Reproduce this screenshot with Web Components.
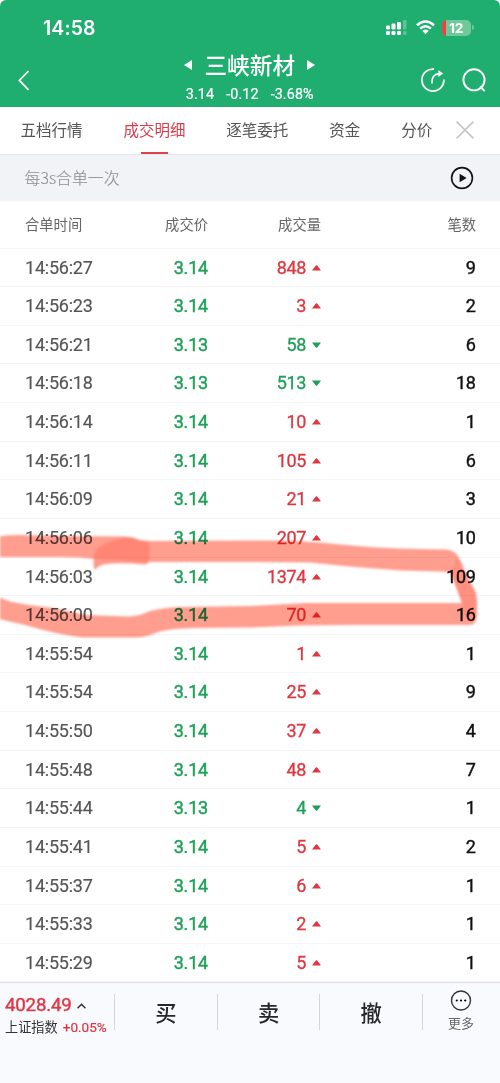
<!DOCTYPE html>
<html lang="zh-CN">
<head>
<meta charset="utf-8">
<title>三峡新材 成交明细</title>
<style>
html,body{margin:0;padding:0}
body{width:500px;height:1083px;overflow:hidden;background:#fff;font-family:Roboto,"Noto Sans CJK SC",sans-serif}
</style>
</head>
<body>
<trade-app></trade-app>
<script>
const define = (name, html, render) => customElements.define(name, class extends HTMLElement {
  connectedCallback() {
    if (this.shadowRoot) return;
    const root = this.attachShadow({mode: 'open'});
    const t = document.createElement('template');
    t.innerHTML = '<style>*{box-sizing:border-box}svg{display:block;flex:none}</style>' + (render ? render(this) : html);
    root.appendChild(t.content.cloneNode(true));
  }
});

define('status-bar', `
<style>
:host{display:flex;height:54px;padding:0 26px 0 43px;justify-content:space-between;align-items:center;color:#fff}
.time{font:600 19.4px/22px Inter,sans-serif;letter-spacing:.15px;padding-top:1px}
.icons{display:flex;align-items:center;gap:9px;padding-top:1px}
.bat{display:flex;align-items:center;gap:1px;margin-left:-2px}
.cell{width:29.500px;height:16px;border-radius:5px;background:linear-gradient(90deg,#f0433f 4px,#70c998 4px);font:700 13.800px/16px Inter,sans-serif;text-align:center;letter-spacing:0}
.nub{width:2px;height:5px;border-radius:0 2px 2px 0;background:#70c998}
</style>
<div class="time">14:58</div>
<div class="icons">
<svg width="21" height="16" viewBox="0 0 21 16" fill="#fff"><rect x="0" y="5.4" width="4" height="4" rx="1.2"/><rect x="5.5" y="3.5" width="4" height="5.9" rx="1.2"/><rect x="11" y="2" width="4" height="7.4" rx="1.2"/><rect x="17" y="0" width="3.5" height="9.4" rx="1.2" opacity=".28"/><rect x="0" y="11" width="4" height="4" rx="1.2"/><rect x="5.5" y="11" width="4" height="4" rx="1.2"/><rect x="11" y="11" width="4" height="4" rx="1.2"/><rect x="17" y="11" width="3.5" height="4" rx="1.2" opacity=".28"/></svg>
<svg width="19" height="15" viewBox="0 0 19 15" fill="none" stroke="#fff" stroke-width="2.5"><path d="M1 5.2Q9.5-2.2 18 5.2M4.1 8.6Q9.5 3.8 14.9 8.6"/><path d="M6.3 10.8Q9.5 8 12.7 10.8L9.5 14.3Z" fill="#fff" stroke="none"/></svg>
<div class="bat"><div class="cell">12</div><div class="nub"></div></div>
</div>`);

define('stock-header', `
<style>
:host{display:flex;height:52px;padding:0 14.500px 0 18px;color:#fff;align-items:stretch;justify-content:space-between}
.side{display:flex;width:64px;align-items:center}
.r{justify-content:flex-end;gap:17px}
.mid{display:flex;flex-direction:column;align-items:center;margin-left:-4px}
.name{display:flex;align-items:center;height:26px;gap:12px;font:500 22.7px/26px "Noto Sans CJK SC",sans-serif;margin-top:-2px}
.q{display:flex;gap:12px;font-size:14.3px;line-height:17px;margin-top:8px;letter-spacing:.12px;-webkit-text-stroke:.2px #fff}
</style>
<div class="side"><svg width="12" height="21" viewBox="0 0 12 21" fill="none" stroke="#fff" stroke-width="1.7"><path d="M10.5 1L1.4 10.4l9.1 9.4"/></svg></div>
<div class="mid"><div class="name"><svg width="8" height="10"><path d="M8 0v10L0 5z" fill="#fff"/></svg><span>三峡新材</span><svg width="8" height="10"><path d="M0 0v10l8-5z" fill="#fff"/></svg></div>
<div class="q"><span>3.14</span><span>-0.12</span><span>-3.68%</span></div></div>
<div class="side r"><svg width="24" height="24" viewBox="0 0 24 24" fill="none" stroke="#fff" stroke-width="1.7"><path d="M13 1.1A11 11 0 1 0 22.900 11.500"/><path d="M11 15.500Q10.400 6 18.5 5.6"/><path d="M17.300 2.300l4.900 3.300-4.900 3.300z" fill="#fff" stroke="none"/></svg>
<svg width="24" height="24" viewBox="0 0 24 24" fill="none" stroke="#fff" stroke-width="1.9"><circle cx="12" cy="11.8" r="10.6"/><path d="M18.2 18.4l4.4 4.8"/></svg></div>`);

define('tab-item', '', el => `
<style>
:host{display:flex;position:relative;height:48px;padding-bottom:2px;align-items:center;color:${el.hasAttribute('active') ? '#dc3c49' : '#555'};font:400 15.5px/20px "Noto Sans CJK SC",sans-serif;white-space:nowrap}
i{position:absolute;left:50%;bottom:0;width:27px;height:2px;margin-left:-13.5px;background:#e0414c}
</style><slot></slot>${el.hasAttribute('active') ? '<i></i>' : ''}`);

define('tab-bar', `
<style>
:host{display:flex;height:48px;padding-left:20.500px;gap:40.900px;align-items:center;background:#fff;border-bottom:1px solid #e6e7ea}
svg{margin-left:-17.300px}
</style><slot></slot><svg width="18" height="18" viewBox="0 0 18 18" stroke="#c4c4c4" stroke-width="1.5"><path d="M.6.6l16.8 16.8M17.4.6L.6 17.4"/></svg>`);

define('merge-bar', `
<style>
:host{display:flex;height:46px;padding:0 26px 0 24.500px;align-items:center;justify-content:space-between;background:#f2f3f7;color:#8f9095;font:300 15.9px/20px "Noto Sans CJK SC",sans-serif;-webkit-text-stroke:.15px #8f9095}
</style><slot></slot><svg width="24" height="24" viewBox="0 0 24 24"><circle cx="12" cy="12" r="10.4" fill="none" stroke="#101216" stroke-width="1.6"/><path d="M9.6 7.8v8.4l7-4.2z" fill="#101216"/></svg>`);

define('list-head', `
<style>
:host{display:grid;grid-template-columns:108px 75px 113px 1fr;height:48px;padding:0 24px 0 25px;align-items:center;border-bottom:1px solid #f5f5f6;color:#666;font:400 14.3px/18px "Noto Sans CJK SC",sans-serif;text-align:right}
.t{text-align:left}
</style><span class="t">合单时间</span><span>成交价</span><span>成交量</span><span>笔数</span>`);

define('trade-row', '', el => {
  const [time, price, vol, dir, count] = el.getAttribute('data').split(',');
  const c = dir === 'u' ? '#df3640' : '#1ea057';
  return `
<style>
:host{display:grid;grid-template-columns:108px 75px 113px 1fr;height:38.63px;padding:.5px 24.5px 0 25px;align-items:center;border-bottom:1px solid #f5f5f6;font-size:18px;line-height:22px;text-align:right;letter-spacing:-.13px}
.t{text-align:left;color:#555;letter-spacing:-.22px;-webkit-text-stroke:.15px #555}
.p{color:#1ea057;letter-spacing:-.2px;-webkit-text-stroke:.4px #1ea057}
.v{display:flex;justify-content:flex-end;align-items:center;gap:6px;color:${c};letter-spacing:-.35px;-webkit-text-stroke:.3px ${c}}
.n{color:#111;letter-spacing:-.35px;-webkit-text-stroke:.4px #111}
</style>
<span class="t">${time}</span><span class="p">${price}</span><span class="v">${vol}<svg width="9" height="6"><path d="${dir === 'u' ? 'M0 5.5h9L5.2.5Q4.5 0 3.8.5z' : 'M0 .5h9L5.2 5.5Q4.5 6 3.8 5.5z'}" fill="${c}"/></svg></span><span class="n">${count}</span>`;
});

/* Highlighter loop drawn by hand over the list */
define('marker-loop', `
<style>:host{position:absolute;left:0;top:525px;width:500px;height:120px;mix-blend-mode:multiply;pointer-events:none}svg{filter:blur(.9px)}</style>
<svg width="500" height="120" viewBox="0 525 500 120">
<path fill="#ff9d8e" d="M-5 537Q5 535 20 535L60 536 125 536.5Q133 537 140 540L152 541 250 540.5Q300 540 330 543.5Q380 548.5 420 549L446 549.5Q454 550 458 556L466 576 475 591Q477.500 597 477 612Q477 625 470 625L350 625 300 625.500 250 627.500 195 628Q170 628.500 158 632Q145 638 132 637.500L82 637.500Q55 634 25 625L-5 618V595Q5 600 12 602Q27 605 50 607.500Q68 611 85 615L128 616.500Q140 616 150 611Q164 607.500 180 607L250 606 305 603 462 603 456 587 450 572 440 571.500 400 570.500 350 566.500 310 562.500 250 562 150 562 96 559Q80 557 60 557L-5 557Z"/>
<path fill="#ff816f" d="M94 569Q92 557 97 549Q105 542 126 537Q134 537 141 541Q150 542 150 547L149 561Q148 565 144 564.500Q120 562 104 564.500Q98 566 96 569Z" opacity=".8"/>
<path fill="#ff816f" opacity=".5" d="M457 557Q461 559 464 568L475 591Q478 598 476.500 619L464 617 462 603 455 584 452 573Z"/>
</svg>`);

define('index-quote', `
<style>
:host{display:flex;flex-direction:column;width:114px;height:36px;padding-left:5px;flex:none}
.a{display:flex;align-items:center;gap:5px;height:22px;padding-top:1px;color:#df3745;font-size:18.7px;line-height:21px;letter-spacing:-.2px;-webkit-text-stroke:.4px #df3745}
.b{display:flex;gap:5px;white-space:nowrap;font:400 13.200px/19px "Noto Sans CJK SC",sans-serif;color:#333;margin-top:1px}
.b em{font:400 13.5px/20px Roboto,sans-serif;color:#df3745;-webkit-text-stroke:.2px #df3745}
</style>
<div class="a">4028.49<svg width="9" height="6" viewBox="0 0 9 6" fill="none" stroke="#333" stroke-width="1.5"><path d="M.5 5.300L4.500 1.200l4 4.100"/></svg></div>
<div class="b"><span>上证指数</span><em>+0.05%</em></div>`);

define('trade-action', `
<style>:host{display:flex;height:36px;width:102.700px;flex:none;align-items:center;justify-content:center;border-left:1px solid #d4d5d8;color:#25272b;font:500 21.300px/30px "Noto Sans CJK SC",sans-serif;padding-bottom:1px;box-sizing:border-box}</style><slot></slot>`);

define('more-action', `
<style>:host{display:flex;flex:1;height:46px;margin-top:-5px;flex-direction:column;align-items:center;gap:3px;color:#66686c;font:400 13px/18px "Noto Sans CJK SC",sans-serif}
:host::before{content:"";position:absolute;left:422px;top:11px;width:1px;height:36px;background:#d4d5d8}</style>
<svg width="22" height="22" viewBox="0 0 22 22"><circle cx="11" cy="11.500" r="9.500" fill="none" stroke="#333" stroke-width="1.400"/><circle cx="6.800" cy="11.500" r="1.100"/><circle cx="11" cy="11.500" r="1.100"/><circle cx="15.200" cy="11.500" r="1.100"/></svg><slot></slot>`);

define('bottom-bar', `
<style>:host{display:flex;position:relative;flex:1;align-items:flex-start;padding-top:11px;background:#f9fafd;border-top:1px solid #dddee1}</style><slot></slot>`);

const rows = `14:56:27,3.14,848,u,9
14:56:23,3.14,3,u,2
14:56:21,3.13,58,d,6
14:56:18,3.13,513,d,18
14:56:14,3.14,10,u,1
14:56:11,3.14,105,u,6
14:56:09,3.14,21,u,3
14:56:06,3.14,207,u,10
14:56:03,3.14,1374,u,109
14:56:00,3.14,70,u,16
14:55:54,3.14,1,u,1
14:55:54,3.14,25,u,9
14:55:50,3.14,37,u,4
14:55:48,3.14,48,u,7
14:55:44,3.13,4,d,1
14:55:41,3.14,5,u,2
14:55:37,3.14,6,u,1
14:55:33,3.14,2,u,1
14:55:29,3.14,5,u,1`.split('\n');

define('trade-app', `
<style>
:host{display:flex;flex-direction:column;position:relative;width:500px;height:1083px;background:#fff}
header{height:106.500px;background:#20ae70;border-radius:6px 6px 0 0;flex:none}
</style>
<header><status-bar></status-bar><stock-header></stock-header></header>
<tab-bar><tab-item>五档行情</tab-item><tab-item active>成交明细</tab-item><tab-item>逐笔委托</tab-item><tab-item>资金</tab-item><tab-item>分价</tab-item></tab-bar>
<merge-bar>每3s合单一次</merge-bar>
<list-head></list-head>
<main>${rows.map(r => `<trade-row data="${r}"></trade-row>`).join('')}</main>
<bottom-bar><index-quote></index-quote><trade-action>买</trade-action><trade-action>卖</trade-action><trade-action>撤</trade-action><more-action>更多</more-action></bottom-bar>
<marker-loop></marker-loop>`);
</script>
</body>
</html>
